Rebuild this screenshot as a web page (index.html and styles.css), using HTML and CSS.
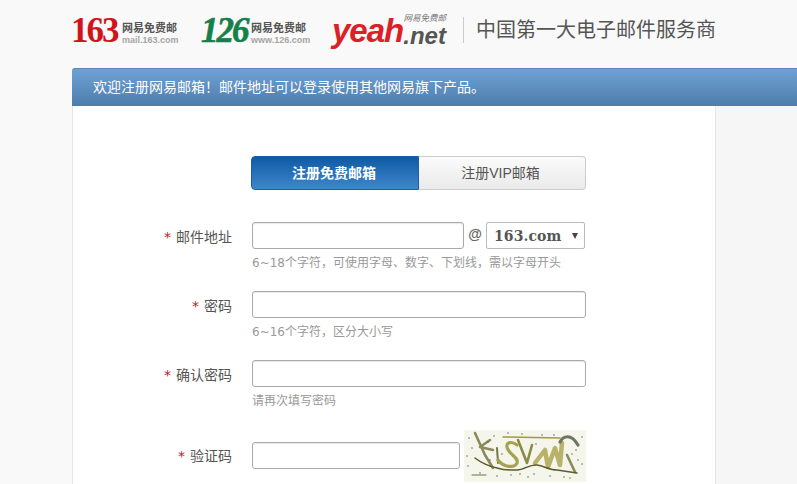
FILE: index.html
```html
<!DOCTYPE html>
<html lang="zh-CN">
<head>
    <title>注册网易免费邮箱</title>
    <link rel="stylesheet" href="styles.css">
</head>
<body>
    <div class="header">
        <div class="brand">
            <span class="num num-163">163</span>
            <div class="brand-text"><b>网易免费邮</b><span>mail.163.com</span></div>
        </div>
        <div class="brand brand-126">
            <span class="num num-126">126</span>
            <div class="brand-text"><b>网易免费邮</b><span>www.126.com</span></div>
        </div>
        <div class="brand-yeah">
            <span class="yeah">yeah</span><div class="net-wrap"><i>网易免费邮</i><span class="net">.net</span></div>
        </div>
        <div class="slogan">中国第一大电子邮件服务商</div>
    </div>

    <div class="banner">欢迎注册网易邮箱！邮件地址可以登录使用其他网易旗下产品。</div>

    <div class="main">
        <div class="card">
            <div class="tabs">
                <div class="tab tab-active">注册免费邮箱</div>
                <div class="tab">注册VIP邮箱</div>
            </div>

            <div class="row row-email">
                <label class="label"><em>*</em>邮件地址</label>
                <div class="field">
                    <div class="email-line">
                        <input class="input input-email" type="text">
                        <span class="at">@</span>
                        <div class="domain"><span>163.com</span><i></i></div>
                    </div>
                    <p class="hint">6~18个字符，可使用字母、数字、下划线，需以字母开头</p>
                </div>
            </div>

            <div class="row">
                <label class="label"><em>*</em>密码</label>
                <div class="field">
                    <input class="input" type="password">
                    <p class="hint">6~16个字符，区分大小写</p>
                </div>
            </div>

            <div class="row">
                <label class="label"><em>*</em>确认密码</label>
                <div class="field">
                    <input class="input" type="password">
                    <p class="hint">请再次填写密码</p>
                </div>
            </div>

            <div class="row row-code">
                <label class="label"><em>*</em>验证码</label>
                <div class="field code-line">
                    <input class="input input-code" type="text">
                    <svg class="captcha" width="122" height="52" viewBox="0 0 122 52">
                        <rect width="122" height="52" fill="#f4f6ec"/>
                        <g fill="none" stroke-linecap="round" stroke-linejoin="round">
                            <path d="M11 3 L21 25 L29 38 M26 10 L16 17 L29 20" stroke="#8b8a5c" stroke-width="2.6"/>
                            <path d="M33 18 L34 33" stroke="#77764a" stroke-width="2"/>
                            <path d="M53 15 C48 11 42 12 43 17 C44 24 55 27 53 33 C51 38 40 38 34 30" stroke="#a6a255" stroke-width="3.2"/>
                            <path d="M54 10 L63 33 L68 15" stroke="#8d8a45" stroke-width="2.6"/>
                            <path d="M71 33 L81 20 L84 37 L91 18 L96 35 L98 13" stroke="#b9b36a" stroke-width="4.5"/>
                            <path d="M96 12 C99 6 107 3 114 15" stroke="#6e7660" stroke-width="3.2"/>
                            <path d="M103 25 L111 42" stroke="#8b8a5c" stroke-width="2.6"/>
                            <path d="M39 7 L96 8" stroke="#a39c3f" stroke-width="1.5"/>
                            <path d="M11 28 C16 32 26 37 33 38 C42 41 48 40 53 40 C60 40 66 34 73 35 C80 36 86 40 93 40 L113 43" stroke="#5f5a2a" stroke-width="1.5"/>
                            <path d="M8 45 L22 45" stroke="#6c6a4a" stroke-width="1"/>
                        </g>
                        <g fill="#55553a">
                            <circle cx="5" cy="8" r=".7"/><circle cx="16" cy="43" r=".7"/><circle cx="30" cy="6" r=".7"/>
                            <circle cx="33" cy="46" r=".7"/><circle cx="47" cy="45" r=".7"/><circle cx="58" cy="4" r=".7"/>
                            <circle cx="70" cy="44" r=".7"/><circle cx="90" cy="5" r=".7"/><circle cx="108" cy="24" r=".7"/>
                            <circle cx="114" cy="30" r=".7"/><circle cx="4" cy="36" r=".7"/><circle cx="26" cy="30" r=".7"/>
                            <circle cx="64" cy="47" r=".7"/><circle cx="100" cy="47" r=".7"/><circle cx="118" cy="7" r=".7"/>
                            <circle cx="8" cy="18" r=".7"/><circle cx="3" cy="26" r=".7"/><circle cx="38" cy="24" r=".7"/>
                            <circle cx="72" cy="14" r=".7"/><circle cx="78" cy="5" r=".7"/><circle cx="56" cy="44" r=".7"/>
                            <circle cx="112" cy="20" r=".7"/><circle cx="118" cy="34" r=".7"/><circle cx="86" cy="46" r=".7"/>
                            <circle cx="24" cy="12" r=".7"/><circle cx="44" cy="3" r=".7"/><circle cx="106" cy="48" r=".7"/>
                        </g>
                    </svg>
                </div>
            </div>
        </div>
        <div class="side"></div>
    </div>
</body>
</html>
```

FILE: styles.css
```css
* {
    box-sizing: border-box;
}

html, body {
    height: 484px;
    overflow: hidden;
}

body {
    margin: 0;
    background: #f9f9f9;
    font-family: "Liberation Sans", "Noto Sans CJK SC", sans-serif;
    font-size: 14px;
    color: #555;
}

/* header */
.header {
    display: flex;
    align-items: center;
    height: 68px;
    padding: 0 0 6px 71px;
}

.brand {
    display: flex;
    align-items: center;
    width: 130px;
}

.num {
    width: 51px;
    font-family: "Liberation Serif", serif;
    font-weight: bold;
    font-size: 35px;
    letter-spacing: -2px;
    line-height: 32px;
}

.num-163 {
    color: #d3131a;
}

.num-126 {
    color: #15804a;
    font-style: italic;
    -webkit-text-stroke: .6px #15804a;
}

.brand-126 .num {
    width: 50px;
}

.brand-text {
    display: flex;
    flex-direction: column;
    margin-top: 6px;
}

.brand-text b {
    font-size: 11px;
    line-height: 13px;
    color: #555;
}

.brand-text span {
    font-size: 9px;
    font-weight: bold;
    line-height: 11px;
    color: #a5a5a5;
}

.brand-yeah {
    display: flex;
    align-items: flex-end;
    width: 131px;
    margin-left: 1px;
}

.yeah {
    font-weight: bold;
    font-style: italic;
    font-size: 33px;
    line-height: 34px;
    letter-spacing: -1px;
    color: #dc2027;
}

.net-wrap {
    display: flex;
    flex-direction: column;
    align-items: flex-end;
}

.net-wrap i {
    font-size: 8.5px;
    line-height: 9px;
    color: #777;
}

.net {
    font-weight: bold;
    font-style: italic;
    font-size: 24px;
    line-height: 25px;
    color: #555;
}

.slogan {
    height: 26px;
    margin-top: -2px;
    padding-left: 12px;
    border-left: 1px solid #ccc;
    font-size: 20px;
    line-height: 26px;
    color: #555;
}

/* banner */
.banner {
    height: 38px;
    margin-left: 72px;
    padding-left: 21px;
    border-top: 1px solid #5a87b4;
    border-radius: 3px 0 0 0;
    background: linear-gradient(#6ea1d4, #4e7dac);
    color: #fff;
    font-size: 14px;
    line-height: 36px;
}

/* form card */
.main {
    display: flex;
    margin-left: 72px;
    height: 378px;
}

.card {
    width: 644px;
    padding: 50px 0 0 0;
    background: #fff;
    border-left: 1px solid #e6e6e6;
    border-right: 1px solid #e6e6e6;
}

.side {
    flex: 1;
    background: #f6f6f6;
}

.tabs {
    display: flex;
    width: 335px;
    height: 34px;
    margin-left: 178px;
}

.tab {
    width: 167px;
    padding-right: 3px;
    border: 1px solid #ccc;
    border-left: 0;
    border-radius: 0 4px 4px 0;
    background: linear-gradient(#fbfbfb, #eaeaea);
    text-align: center;
    line-height: 33px;
    font-size: 14px;
    color: #555;
}

.tab-active {
    width: 168px;
    padding-right: 2px;
    border: 1px solid #1b5ea6;
    border-radius: 4px 0 0 4px;
    background: linear-gradient(#0f5aa5, #3f87cc);
    color: #fff;
    font-weight: bold;
}

.row {
    display: flex;
    height: 69px;
}

.row-email {
    margin-top: 32px;
}

.row-code {
    height: 42px;
    margin-top: 8px;
}

.label {
    width: 159px;
    padding-top: 7px;
    text-align: right;
    font-size: 14px;
    line-height: 16px;
    color: #555;
}

.row-code .label {
    padding-top: 11px;
}

.label em {
    margin-right: 5px;
    font-family: "DejaVu Sans", sans-serif;
    font-style: normal;
    color: #b5232a;
}

.field {
    margin-left: 20px;
}

.email-line, .code-line {
    display: flex;
    align-items: flex-start;
}

.input {
    display: block;
    width: 334px;
    height: 27px;
    border: 1px solid #aaa;
    border-radius: 3px;
    background: #fff;
    box-shadow: inset 0 1px 1px #e8e8e8;
    outline: none;
}

.input-email {
    width: 212px;
}

.at {
    width: 22px;
    text-align: center;
    font-size: 14px;
    font-weight: bold;
    line-height: 24px;
    color: #666;
}

.domain {
    display: flex;
    align-items: center;
    justify-content: space-between;
    width: 99px;
    height: 27px;
    padding: 0 6px 0 7px;
    border: 1px solid #bbb;
    border-radius: 2px;
    font-family: "DejaVu Serif", serif;
    font-weight: bold;
    font-size: 14px;
    letter-spacing: .1px;
    color: #555;
}

.domain i {
    border-top: 6px solid #444;
    border-left: 3px solid transparent;
    border-right: 3px solid transparent;
}

.hint {
    margin: 7px 0 0;
    font-family: "DejaVu Sans", "Noto Sans CJK SC", sans-serif;
    font-size: 12px;
    line-height: 14px;
    color: #999;
}

.input-code {
    width: 208px;
    margin-top: 5px;
}

.captcha {
    margin-left: 4px;
    margin-top: -7px;
}
```
